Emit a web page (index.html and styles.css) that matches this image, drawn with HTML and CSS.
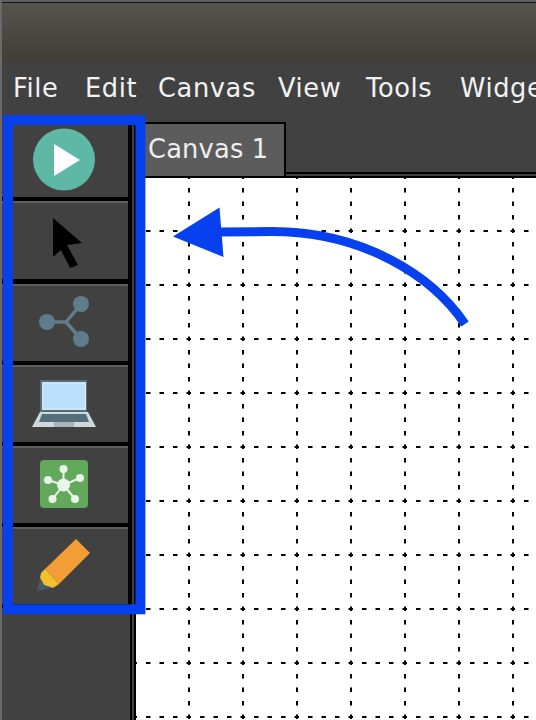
FILE: index.html
```html
<!DOCTYPE html>
<html>
<head>
  <title>Canvas</title>
  <link rel="stylesheet" href="styles.css">
</head>
<body>

<div class="window">
  <div class="titlebar"></div>

  <div class="menubar">
    <span>File</span>
    <span>Edit</span>
    <span>Canvas</span>
    <span>View</span>
    <span>Tools</span>
    <span>Widgets</span>
  </div>

  <div class="main">
    <!-- Left toolbar -->
    <div class="toolbar">
      <div class="tool tool-first">
        <svg width="128" height="73" viewBox="2 124 128 73">
          <circle cx="64" cy="159.5" r="31" fill="#5fb8a5"/>
          <path d="M54 144L80 160L54 176Z" fill="#fff"/>
        </svg>
      </div>
      <div class="tool tool-active">
        <svg width="128" height="77" viewBox="2 201 128 77">
          <path d="M53 218L82 243L67 245L78 265L70 268L61 250L53 257Z" fill="#000"/>
        </svg>
      </div>
      <div class="tool">
        <svg width="128" height="75" viewBox="2 284 128 75">
          <path d="M81 304L66 322H47M66 322L81 339" fill="none" stroke="#5f7c8a" stroke-width="3.5"/>
          <circle cx="81" cy="304" r="8" fill="#5f7c8a"/>
          <circle cx="47" cy="322" r="8" fill="#5f7c8a"/>
          <circle cx="81" cy="339" r="8" fill="#5f7c8a"/>
        </svg>
      </div>
      <div class="tool">
        <svg width="128" height="78" viewBox="2 363 128 78">
          <rect x="40" y="378" width="47" height="32" fill="#546e7a"/>
          <rect x="42" y="380" width="44" height="28" fill="#cfe4f7"/>
          <rect x="44" y="382" width="40" height="24" fill="#bbdefb"/>
          <path d="M40 410H88L96 425H32Z" fill="#cfd8dc"/>
          <path d="M42 412H86L89 420H39Z" fill="#546e7a"/>
          <rect x="54" y="420" width="20" height="5" fill="#a7b5bc"/>
        </svg>
      </div>
      <div class="tool">
        <svg width="128" height="77" viewBox="2 446 128 77">
          <rect x="40" y="460" width="48" height="48" rx="4" fill="#63a95c"/>
          <path d="M63.5 485V469M63.5 485L80 478M63.5 485L75 499M63.5 485L52.5 499M63.5 485L48 480" stroke="#e8f5e9" stroke-width="2"/>
          <circle cx="63.5" cy="485" r="6.5" fill="#e8f5e9"/>
          <circle cx="63.5" cy="469" r="4" fill="#e8f5e9"/>
          <circle cx="80" cy="478" r="4" fill="#e8f5e9"/>
          <circle cx="75" cy="499" r="4" fill="#e8f5e9"/>
          <circle cx="52.5" cy="499" r="4" fill="#e8f5e9"/>
          <circle cx="48" cy="480" r="4" fill="#e8f5e9"/>
        </svg>
      </div>
      <div class="tool">
        <svg width="128" height="76" viewBox="2 528 128 76">
          <path d="M76 540L90 554L59 585L45 570Z" fill="#f29d35"/>
          <path d="M45 570L59 585L53 589L44 586L40 579L41 574Z" fill="#f2c12e"/>
          <path d="M40 579L37 592L53 589L44 586Z" fill="#455a64"/>
        </svg>
      </div>
    </div>

    <!-- Canvas with tab -->
    <div class="workspace">
      <div class="tabbar">
        <div class="tab">Canvas 1</div>
      </div>
      <svg class="grid" width="400" height="542">
        <defs>
          <pattern id="dots" width="54" height="54" patternUnits="userSpaceOnUse">
            <path d="M53 -3.5V54M-3.5 53H54" fill="none" stroke="#000" stroke-width="2" stroke-dasharray="4.5 9"/>
          </pattern>
        </defs>
        <rect width="400" height="542" fill="#fff"/>
        <rect width="400" height="542" fill="url(#dots)"/>
      </svg>
    </div>
  </div>
</div>

<!-- Blue annotation drawn over the screenshot -->
<svg class="markup" width="536" height="720">
  <rect x="8" y="120" width="132.4" height="489.3" fill="none" stroke="#0640ef" stroke-width="10"/>
  <path d="M465 324C432 275 362 231 270 231.5L220 232" fill="none" stroke="#0640ef" stroke-width="9"/>
  <path d="M173 236.5L219.5 207.5L223.5 257Z" fill="#0640ef"/>
</svg>

</body>
</html>
```

FILE: styles.css
```css
body { margin: 0; background: #414141; font-family: "DejaVu Sans", sans-serif; overflow: hidden; }
.window {
  width: 534px; height: 720px; overflow: hidden;
  display: flex; flex-direction: column;
  border-left: 2px solid #6a6a6a;
}
.titlebar {
  height: 58px; flex: none;
  border-top: 2px solid #5e5e5e;
  box-shadow: inset 0 1px #111;
  background: linear-gradient(#57544d, #3f3e39);
}
.menubar {
  height: 62px; flex: none; box-sizing: border-box;
  display: grid; grid-template-columns: 72px 73px 120px 88px 94px 100px;
  padding: 12px 0 0 11px;
  font-size: 25.7px; line-height: 32px; letter-spacing: .6px; color: #f2f2f2; white-space: nowrap;
}
.main { flex: 1; display: flex; min-height: 0; }

.toolbar {
  width: 128px; flex: none;
  padding-top: 2px; margin-right: 2px;
  border-right: 2px solid #000;
}
.tool {
  width: 126px; height: 77px;
  border-right: 2px solid #000;
  border-bottom: 4px solid #000;
  box-shadow: inset 0 2px #5e5e5e;
  background: #414141;
}
.tool svg { display: block; }
.tool-first { height: 73px; box-shadow: none; }
.tool-active { height: 78px; border-bottom-width: 5px; }

.workspace { flex: 1; border-left: 2px solid #000; min-width: 0; }
.tabbar { height: 54px; display: flex; border-bottom: 2px solid #000; }
.tab {
  width: 150px; box-sizing: border-box;
  border-top: 2px solid #000; border-right: 2px solid #000;
  background: #5c5c5c; color: #eee;
  font-size: 25.7px; line-height: 50px; letter-spacing: .2px; padding-left: 12px; white-space: nowrap;
}
.tabbar::after {
  content: ""; flex: 1;
  border-bottom: 2px solid #000;
  box-shadow: inset 0 -1px #414141;
  height: 50px;
}
.grid { display: block; }

.markup { position: absolute; left: 0; top: 0; }
```
